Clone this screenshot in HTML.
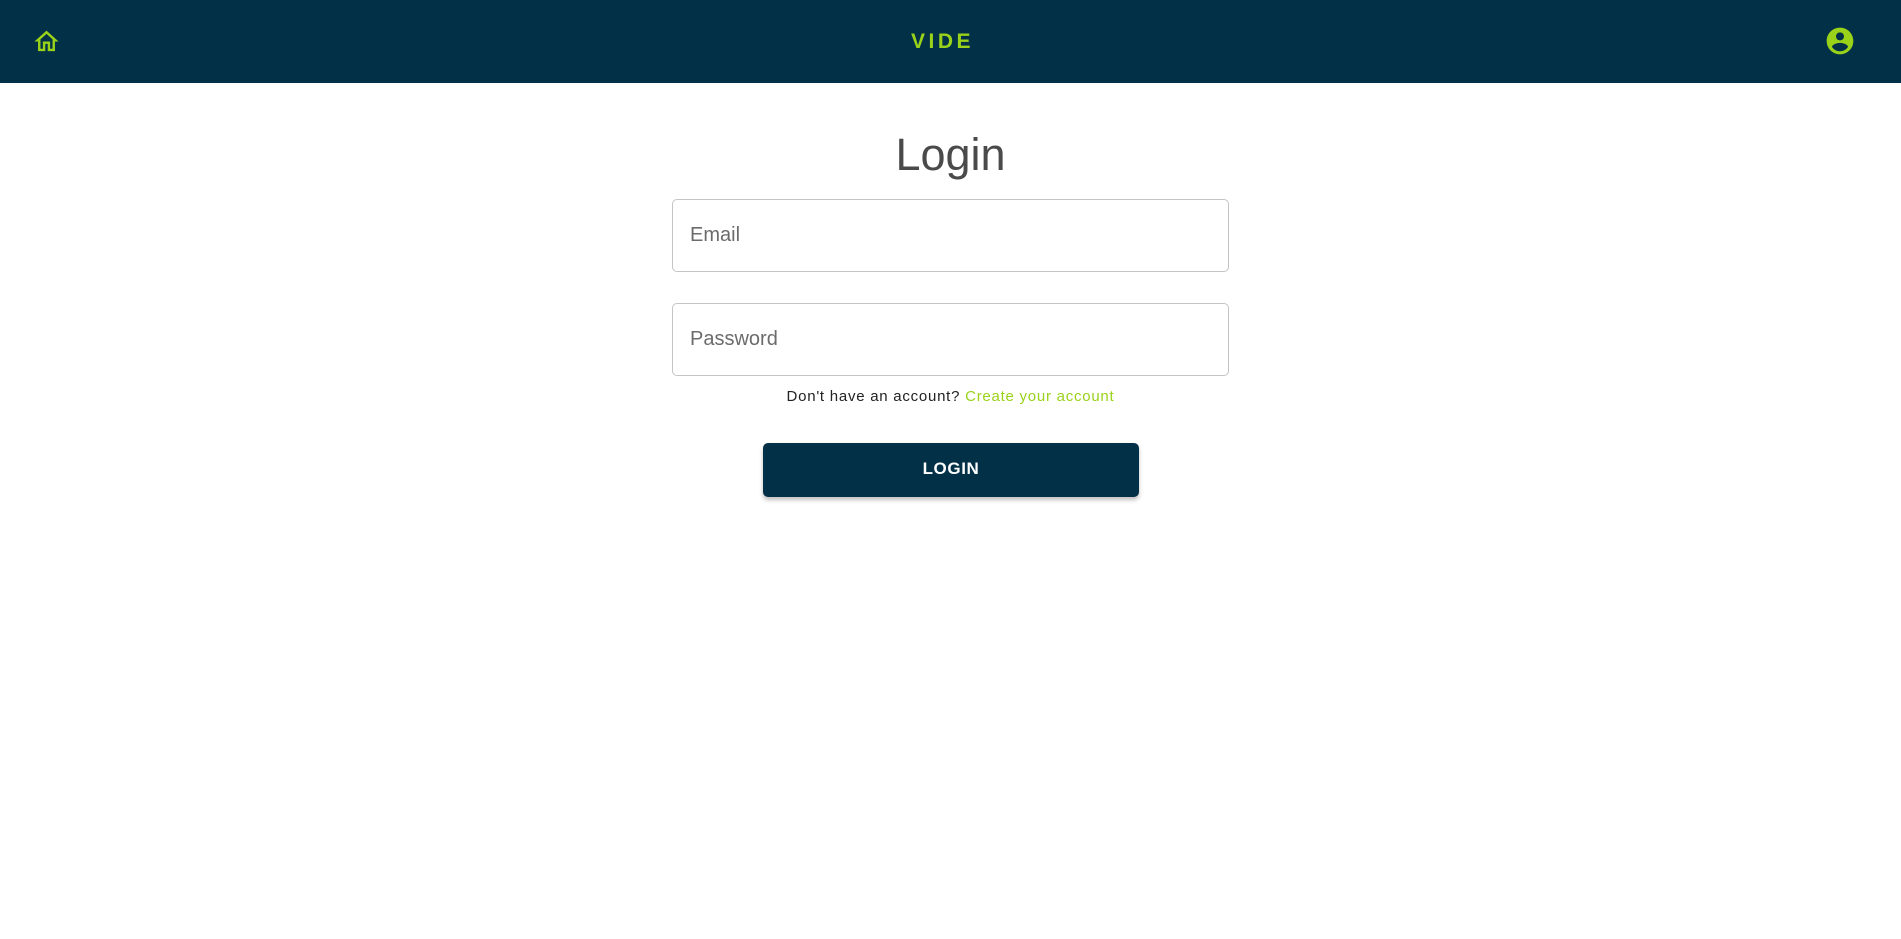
<!DOCTYPE html>
<html><head><meta charset="utf-8"><style>
*{box-sizing:border-box;margin:0;padding:0}
body{width:1901px;height:939px;background:#fff;font-family:"Liberation Sans",sans-serif;overflow:hidden;position:relative}
.hdr{position:absolute;left:0;top:0;width:1901px;height:83px;background:#023047}
.vide{position:absolute;left:0;width:1885px;top:28px;text-align:center;color:#9ad21a;font-size:21px;font-weight:bold;letter-spacing:3.5px;line-height:28px}
h1{position:absolute;left:0;width:1901px;top:127px;text-align:center;font-weight:normal;font-size:45px;color:#4a4a4a;line-height:56px}
.box{position:absolute;left:672px;width:557px;height:73px;border:1px solid #c4c4c4;border-radius:5px;font-size:20px;color:#6b6b6b;padding-left:17px;line-height:71px}
.t{position:absolute;left:0;width:1901px;top:387px;text-align:center;font-size:15px;color:#222;letter-spacing:.75px;line-height:20px}
.t span{color:#9ad21a}
.btn{position:absolute;left:763px;top:443px;width:376px;height:54px;background:#023047;border-radius:5px;color:#fff;font-weight:bold;font-size:17px;letter-spacing:.6px;text-align:center;line-height:52px;box-shadow:0 3px 4px rgba(0,0,0,.25)}
</style></head><body>
<div class="hdr">
<svg style="position:absolute;left:32px;top:27px" width="29" height="29" viewBox="0 0 24 24"><path fill="#9ad21a" d="M12 5.69l5 4.5V18h-2v-6H9v6H7v-7.81l5-4.5M12 3L2 12h3v8h6v-6h2v6h6v-8h3L12 3z"/></svg>
<div class="vide">VIDE</div>
<svg style="position:absolute;left:1824px;top:25px" width="32" height="32" viewBox="0 0 24 24"><path fill="#9ad21a" d="M12 2C6.480 2 2 6.48 2 12s4.48 10 10 10 10-4.48 10-10S17.52 2 12 2zm0 3.5c1.66 0 3 1.34 3 3s-1.34 3-3 3-3-1.34-3-3 1.34-3 3-3zm0 14.2c-2.5 0-4.71-1.28-6-3.220.03-1.99 4-3.08 6-3.08 1.99 0 5.97 1.09 6 3.08-1.29 1.94-3.5 3.22-6 3.22z"/></svg>
</div>
<h1>Login</h1>
<div class="box" style="top:199px">Email</div>
<div class="box" style="top:303px">Password</div>
<div class="t">Don't have an account? <span>Create your account</span></div>
<div class="btn">LOGIN</div>
</body></html>
